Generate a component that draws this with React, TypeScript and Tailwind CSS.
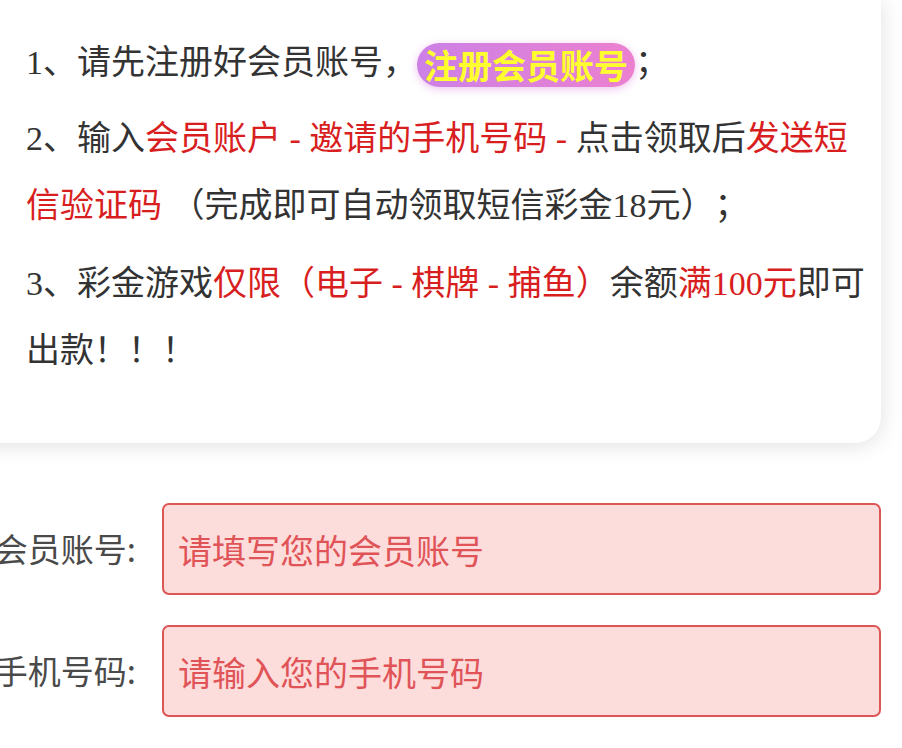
const red = "text-[#d81e1e]";

const Field = ({ label, placeholder }: { label: string; placeholder: string }) => (
  <div className="flex items-center">
    <div className="w-[136px] shrink-0 flex justify-end whitespace-nowrap text-[33px] text-[#4a4a4a]">
      {label}
    </div>
    <input
      type="text"
      placeholder={placeholder}
      className="ml-[26px] w-[719px] h-[92px] rounded-[7px] border-2 border-[#dc5656] bg-[#fddcdc] pl-[14px] text-[34px] text-[#333] outline-none placeholder:text-[#e05458]"
    />
  </div>
);

export default function App() {
  return (
    <div className="min-h-[748px] bg-white overflow-hidden font-['Noto_Sans_CJK_SC',sans-serif] [text-spacing-trim:space-all]">
      {/* rules card */}
      <div className="-ml-[30px] mr-[21px] bg-white rounded-br-[26px] shadow-[0_2px_22px_rgba(0,0,0,0.13)] pl-[56px] pr-[7px] pt-[29px] pb-[59px] text-[34px] leading-[67px] text-[#333] font-['Liberation_Serif','Noto_Sans_CJK_SC',serif]">
        <p className="mb-[9px]">
          1、请先注册好会员账号，
          <span className="inline-block h-[44px] leading-[44px] align-[-5px] rounded-full bg-gradient-to-r from-[#cc80e6] to-[#ec80cf] px-[7px] font-bold text-[#ffff2e] shadow-[0_2px_8px_rgba(214,120,220,0.45)] font-['Noto_Sans_CJK_SC',sans-serif]">
            注册会员账号
          </span>
          ；
        </p>
        <p className="mb-[11px]">
          2、输入<span className={red}>会员账户 - 邀请的手机号码 -</span> 点击领取后
          <span className={red}>发送短信验证码</span> （完成即可自动领取短信彩金18元）；
        </p>
        <p>
          3、彩金游戏<span className={red}>仅限（电子 - 棋牌 - 捕鱼）</span>余额
          <span className={red}>满100元</span>即可出款！！！
        </p>
      </div>

      {/* form */}
      <div className="mt-[60px] flex flex-col gap-[30px]">
        <Field label="会员账号:" placeholder="请填写您的会员账号" />
        <Field label="手机号码:" placeholder="请输入您的手机号码" />
      </div>
    </div>
  );
}
